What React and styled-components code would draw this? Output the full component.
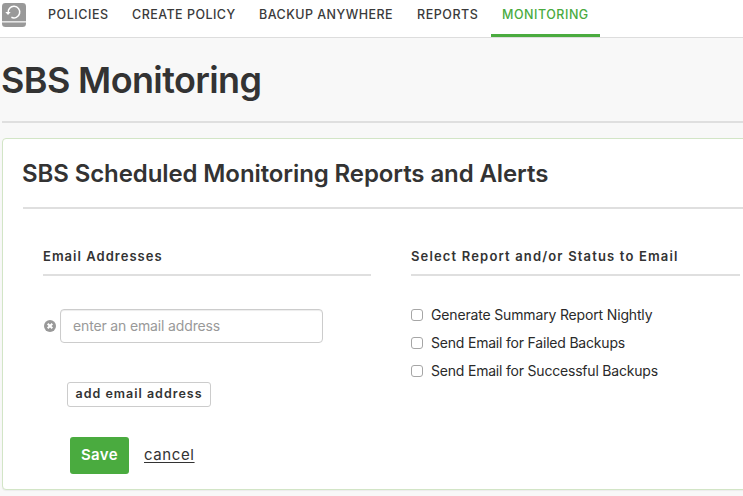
import React from "react";
import styled, { createGlobalStyle } from "styled-components";

const GlobalStyle = createGlobalStyle`
  *, *::before, *::after { box-sizing: border-box; }
  html { background: #f8f8f8; }
  body {
    margin: 0;
    overflow: hidden;
    background: #f8f8f8;
    color: #333;
    font-family: Inter, "Liberation Sans", sans-serif;
  }
  h1, h2, h3 { margin: 0; font-weight: 600; }
`;

const Page = styled.div`
  width: 100%;
  height: 496px;
  overflow: hidden;
`;

const TopBar = styled.header`
  display: flex;
  height: 38px;
  background: #fff;
  border-bottom: 1px solid #ddd;
`;

const Logo = styled.svg`
  display: block;
  flex: none;
  width: 24px;
  height: 24px;
  margin: 3px 11px 0 2px;
`;

const Nav = styled.nav`
  display: flex;
  gap: 2px;
`;

const NavItem = styled.a`
  flex: none;
  width: ${(p) => p.$width}px;
  height: 37px;
  padding: 4px 0 0 11px;
  font-size: 12.5px;
  font-weight: 550;
  line-height: 21px;
  letter-spacing: ${(p) => p.$tracking}px;
  white-space: nowrap;
  color: ${(p) => (p.$active ? "#4aab3f" : "#3a3a3a")};
  border-bottom: ${(p) => (p.$active ? "3px solid #4aab3f" : "0")};
`;

const PageTitle = styled.h1`
  height: 85px;
  margin-left: 2px;
  padding-top: 20px;
  border-bottom: 2px solid #dfdfdf;
  font-size: 36px;
  line-height: 44px;
  letter-spacing: -0.63px;
  text-indent: -1px;
  white-space: nowrap;
`;

const Card = styled.section`
  width: 760px;
  height: 352px;
  margin: 15px 0 0 2px;
  padding-left: 20px;
  background: #fff;
  border: 1px solid #d2e5c6;
  border-radius: 4px;
  box-shadow: 0 1px 1px rgba(0, 0, 0, 0.05);
`;

const CardTitle = styled.h2`
  height: 70px;
  padding-top: 20px;
  border-bottom: 2px solid #dfdfdf;
  font-size: 24px;
  line-height: 30px;
  letter-spacing: -0.1px;
  text-indent: -1px;
  white-space: nowrap;
`;

const Columns = styled.div`
  display: grid;
  grid-template-columns: 328px 329px;
  column-gap: 40px;
  padding: 38px 0 0 20px;
`;

const ColumnTitle = styled.h3`
  height: 29px;
  border-bottom: 2px solid #dfdfdf;
  font-size: 13px;
  line-height: 18px;
  letter-spacing: ${(p) => p.$tracking}px;
  white-space: nowrap;
`;

const EmailRow = styled.div`
  display: flex;
  align-items: center;
  gap: 4px;
  margin-top: 33px;
  padding-left: 1px;
`;

const RemoveIcon = styled.svg`
  display: block;
  flex: none;
  width: 12px;
  height: 12px;
`;

const EmailInput = styled.input`
  width: 263px;
  height: 34px;
  padding: 0 12px 2px;
  background: #fff;
  border: 1px solid #ccc;
  border-radius: 4px;
  box-shadow: inset 0 1px 1px rgba(0, 0, 0, 0.075);
  font: 400 14px/20px Inter, "Liberation Sans", sans-serif;
  letter-spacing: -0.15px;
  outline: 0;
  &::placeholder { color: #999; opacity: 1; }
`;

const AddButton = styled.button`
  display: block;
  width: 144px;
  height: 25px;
  margin: 39px 0 0 24px;
  padding: 0 0 2px;
  background: #fff;
  border: 1px solid #ccc;
  border-radius: 3px;
  color: #333;
  font: 600 12.5px/18px Inter, "Liberation Sans", sans-serif;
  letter-spacing: 1px;
  white-space: nowrap;
`;

const Actions = styled.div`
  display: flex;
  align-items: center;
  gap: 15px;
  margin: 30px 0 0 27px;
`;

const SaveButton = styled.button`
  width: 59px;
  height: 37px;
  padding: 0 0 1px;
  background: #4aab3f;
  border: 0;
  border-radius: 3px;
  color: #fff;
  font: 600 15px/20px Inter, "Liberation Sans", sans-serif;
  letter-spacing: 0.4px;
`;

const CancelLink = styled.a`
  padding-bottom: 2px;
  font-size: 15px;
  line-height: 20px;
  letter-spacing: 0.6px;
  text-decoration: underline;
  text-underline-offset: 2px;
  text-decoration-skip-ink: none;
`;

const Options = styled.div`
  display: flex;
  flex-direction: column;
  gap: 8px;
  margin-top: 30px;
`;

const Option = styled.label`
  display: flex;
  align-items: center;
  gap: 8px;
  height: 20px;
`;

const OptionLabel = styled.span`
  padding-bottom: 2px;
  font-size: 14px;
  line-height: 20px;
  letter-spacing: ${(p) => p.$tracking}px;
  color: #2a2a2a;
  white-space: nowrap;
`;

const Checkbox = styled.input.attrs({ type: "checkbox" })`
  appearance: none;
  width: 12px;
  height: 12px;
  margin: -2px 0 0;
  background: #fff;
  border: 1px solid #a6a6a6;
  border-radius: 3px;
`;

const navItems = [
  { label: "POLICIES", width: 82, tracking: 0.55 },
  { label: "CREATE POLICY", width: 125, tracking: 0.47 },
  { label: "BACKUP ANYWHERE", width: 156, tracking: 0.47 },
  { label: "REPORTS", width: 83, tracking: 0.55 },
  { label: "MONITORING", width: 109, tracking: 0.52, active: true },
];

const options = [
  { label: "Generate Summary Report Nightly", tracking: -0.16 },
  { label: "Send Email for Failed Backups", tracking: -0.2 },
  { label: "Send Email for Successful Backups", tracking: -0.2 },
];

export default function App() {
  return (
    <Page>
      <GlobalStyle />
      <TopBar>
        <Logo viewBox="0 0 24 24" aria-hidden="true">
          <path d="M3.5 0h17A3.5 3.5 0 0 1 24 3.5V18H0V3.5A3.5 3.5 0 0 1 3.5 0Z" fill="#999" />
          <path d="M0 18h24v1.4H0Z" fill="#e4e4e4" />
          <path d="M0 19.4h24v1.1a3.5 3.5 0 0 1-3.5 3.5h-17A3.5 3.5 0 0 1 0 20.5Z" fill="#999" />
          <path d="M6.2 10A5.8 5.8 0 1 1 9.4 14.3" fill="none" stroke="#fff" strokeWidth="1.5" />
          <path d="M3.3 9.1h5.4L6 12Z" fill="#fff" />
        </Logo>
        <Nav>
          {navItems.map((item) => (
            <NavItem
              key={item.label}
              $width={item.width}
              $tracking={item.tracking}
              $active={item.active}
            >
              {item.label}
            </NavItem>
          ))}
        </Nav>
      </TopBar>
      <PageTitle>SBS Monitoring</PageTitle>
      <Card>
        <CardTitle>SBS Scheduled Monitoring Reports and Alerts</CardTitle>
        <Columns>
          <div>
            <ColumnTitle $tracking={1.02}>Email Addresses</ColumnTitle>
            <EmailRow>
              <RemoveIcon viewBox="0 0 12 12" aria-hidden="true">
                <circle cx="6" cy="6" r="6" fill="#999" />
                <path d="m3.7 3.7 4.6 4.6m0-4.6L3.7 8.3" stroke="#fff" strokeWidth="2" />
              </RemoveIcon>
              <EmailInput placeholder="enter an email address" />
            </EmailRow>
            <AddButton>add email address</AddButton>
            <Actions>
              <SaveButton>Save</SaveButton>
              <CancelLink>cancel</CancelLink>
            </Actions>
          </div>
          <div>
            <ColumnTitle $tracking={1.16}>Select Report and/or Status to Email</ColumnTitle>
            <Options>
              {options.map((option) => (
                <Option key={option.label}>
                  <Checkbox />
                  <OptionLabel $tracking={option.tracking}>{option.label}</OptionLabel>
                </Option>
              ))}
            </Options>
          </div>
        </Columns>
      </Card>
    </Page>
  );
}
